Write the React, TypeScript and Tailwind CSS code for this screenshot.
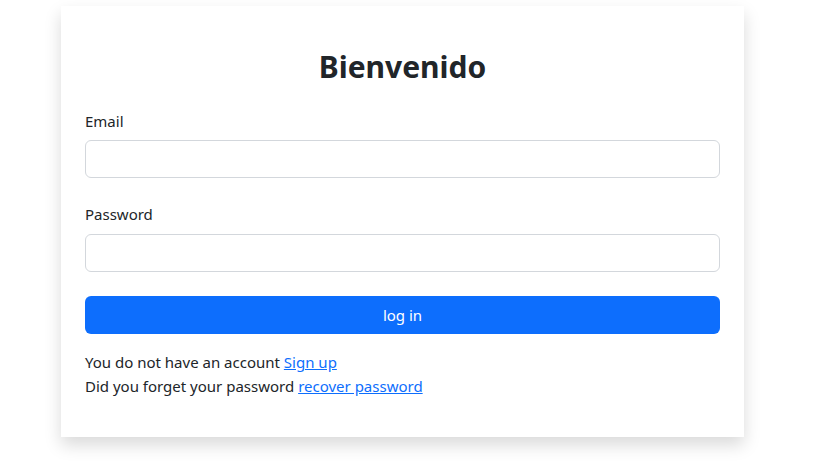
export default function App() {
  return (
    <div className="min-h-[463px] bg-white font-['Noto_Sans',sans-serif] text-[15px] leading-6 text-[#212529]">
      <div className="ml-[61px] mt-[6px] w-[683px] bg-white px-6 pt-[42px] pb-[39px] shadow-[0_8px_16px_rgba(0,0,0,0.15)]">
        <h2 className="mb-[23px] text-center text-[30px] font-bold leading-[38px]">Bienvenido</h2>
        <form onSubmit={(e) => e.preventDefault()}>
          <div className="mb-6">
            <label className="mb-[7px] block">Email</label>
            <input
              type="email"
              className="block h-[38px] w-full rounded-md border border-[#d3d7dc] px-3 outline-none"
            />
          </div>
          <div className="mb-6">
            <label className="mb-2 block">Password</label>
            <input
              type="password"
              className="block h-[38px] w-full rounded-md border border-[#d3d7dc] px-3 outline-none"
            />
          </div>
          <button
            type="submit"
            className="block h-[38px] w-full rounded-md bg-[#0d6efd] text-white"
          >
            log in
          </button>
        </form>
        <div className="mt-4">
          <p>
            You do not have an account{" "}
            <a href="#" className="text-[#0d6efd] underline">
              Sign up
            </a>
          </p>
          <p>
            Did you forget your password{" "}
            <a href="#" className="text-[#0d6efd] underline">
              recover password
            </a>
          </p>
        </div>
      </div>
    </div>
  );
}
